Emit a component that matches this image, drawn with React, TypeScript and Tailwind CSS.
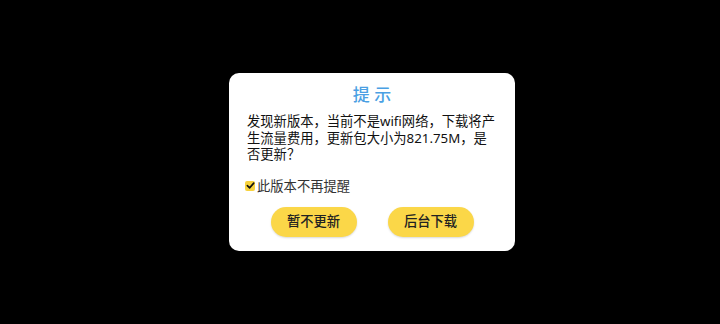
import React, { useState } from "react";

const font = { fontFamily: '"Noto Sans", "Noto Sans CJK SC", sans-serif' };

export default function App() {
  const [skip, setSkip] = useState(true);

  return (
    <div className="w-[720px] h-[324px] bg-black flex items-center justify-center pl-[24px]" style={font}>
      <div className="w-[286px] h-[178px] bg-white rounded-[10px] flex flex-col px-[18px] pt-[10px]">
        <div className="text-center text-[17px] leading-[24px] text-[#4a9fe3] font-medium">
          提 示
        </div>
        <p className="mt-[6px] text-[13.3px] leading-[16.5px] text-[#111] whitespace-nowrap">
          发现新版本，当前不是wifi网络，下载将产
          <br />
          生流量费用，更新包大小为821.75M，是
          <br />
          否更新？
        </p>
        <label className="mt-[15px] flex items-center gap-[2px] -ml-[2px] text-[13.3px] leading-[16px] text-[#333] cursor-pointer">
          <span
            onClick={() => setSkip(!skip)}
            className="w-[10px] h-[10px] rounded-[2px] bg-[#f7d23e] flex items-center justify-center"
          >
            {skip && (
              <svg width="9" height="9" viewBox="0 0 10 10">
                <path d="M1.5 5.2 L4 7.6 L8.6 2.4" fill="none" stroke="#111" strokeWidth="1.8" strokeLinecap="round" strokeLinejoin="round" />
              </svg>
            )}
          </span>
          此版本不再提醒
        </label>
        <div className="mt-[13px] flex justify-center gap-[31px]">
          <button className="w-[86px] h-[30px] rounded-full bg-[#fbd748] shadow-[0_1px_2px_rgba(0,0,0,0.15)] text-[13.3px] font-medium text-[#222]">
            暂不更新
          </button>
          <button className="w-[86px] h-[30px] rounded-full bg-[#fbd748] shadow-[0_1px_2px_rgba(0,0,0,0.15)] text-[13.3px] font-medium text-[#222]">
            后台下载
          </button>
        </div>
      </div>
    </div>
  );
}
